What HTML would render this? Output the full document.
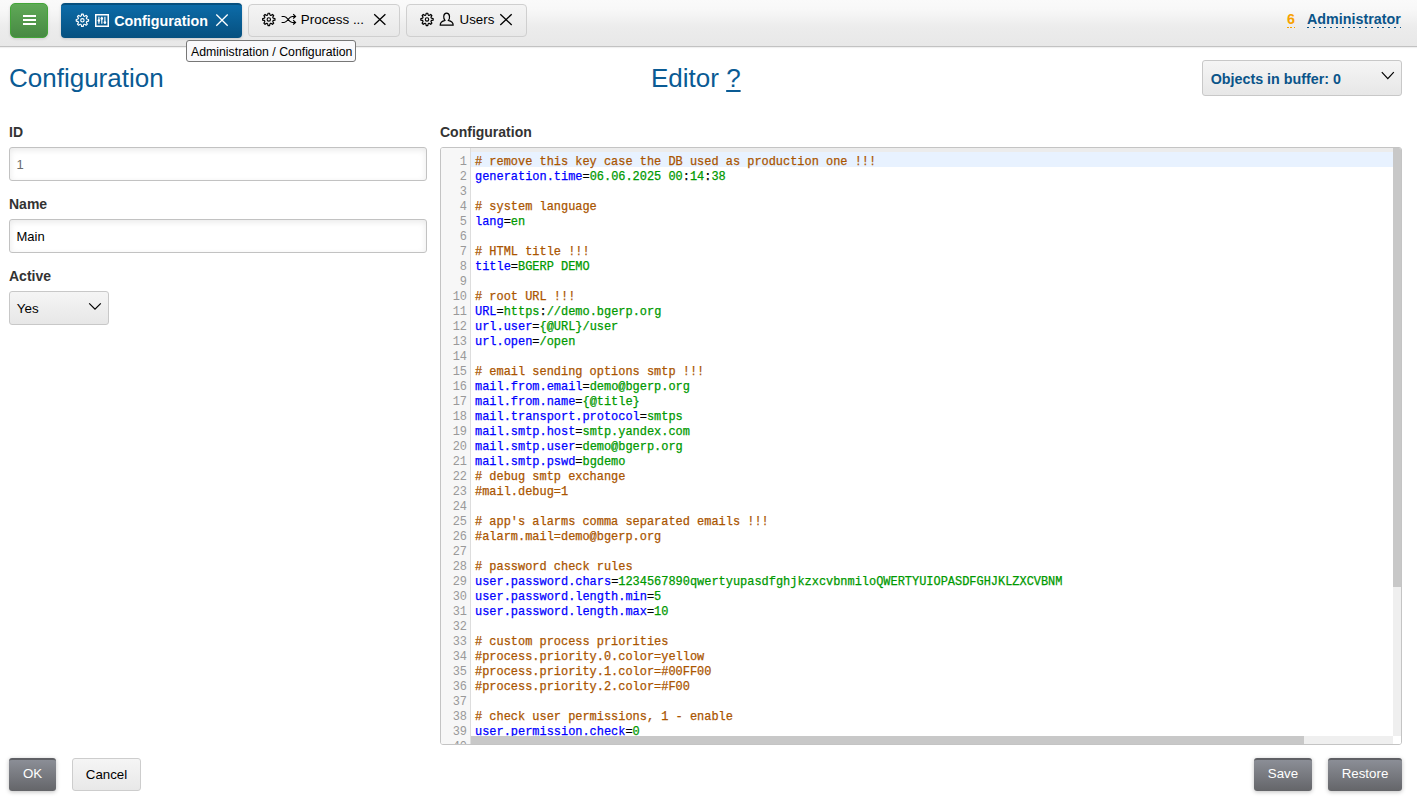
<!DOCTYPE html>
<html><head><meta charset="utf-8">
<style>
*{box-sizing:border-box}
html,body{margin:0;padding:0;width:1417px;height:805px;overflow:hidden;background:#fff;font-family:"Liberation Sans",sans-serif;color:#333}
.abs{position:absolute}
#hdr{position:absolute;left:0;top:0;width:1417px;height:47px;background:linear-gradient(#fafafa 0,#f8f8f8 9px,#ececec 27px,#e8e8e8 46px);border-bottom:1px solid #c2c2c2;box-shadow:0 1px 1px rgba(0,0,0,.06)}
#menu{left:10px;top:3px;width:38px;height:35px;border:1px solid #43a538;border-radius:5px;background:linear-gradient(#5fa957,#478943);box-shadow:0 1px 3px rgba(0,0,0,.12)}
#menu i{position:absolute;left:11.6px;width:13px;height:1.7px;background:#fff}
.tab{position:absolute;border-radius:4px;font-size:13px;color:#000}
#t1{left:61px;top:3px;width:181px;height:35px;background:linear-gradient(#0c6ba8,#06507f);border-top:2px solid #064f7e;color:#fff;font-weight:bold;font-size:14px;box-shadow:0 1px 3px rgba(0,0,0,.15)}
#t2{left:248px;top:4px;width:152px;height:33px;border:1px solid #cfcfcf;background:linear-gradient(#f4f4f4,#e8e8e8)}
#t3{left:406px;top:4px;width:121px;height:33px;border:1px solid #cfcfcf;background:linear-gradient(#f4f4f4,#e8e8e8)}
.tab span{position:absolute;white-space:nowrap}
.tab svg{position:absolute}
#tip{left:186px;top:40px;width:170px;height:22px;border:1px solid #777;border-radius:3px;background:#f9f9fb;font-size:12.3px;color:#000;padding:4px 0 0 4px;white-space:nowrap}
#user{right:16px;top:11px;font-size:14px;font-weight:bold;white-space:nowrap}
h1{position:absolute;margin:0;font-weight:normal;font-size:26px;color:#0a5b94;white-space:nowrap}
.lbl{position:absolute;font-weight:bold;font-size:14px;color:#333;white-space:nowrap}
.inp{position:absolute;left:9px;width:418px;height:34px;border:1px solid #c2c2c2;border-radius:3px;background:#fff;box-shadow:inset 0 2px 6px rgba(0,0,0,.09);font-size:13px;color:#000;padding:0 0 0 6.5px;line-height:33px}
.sel{position:absolute;border:1px solid #c8c8c8;border-radius:3px;background:linear-gradient(#f5f5f5,#e7e7e7)}
.btn{position:absolute;top:758px;height:33px;border-radius:3px;font-size:13.3px;text-align:center;line-height:32px}
.dark{background:linear-gradient(#8b8e96,#646569);border-top:2px solid #5f6065;color:#fff;box-shadow:0 1px 4px rgba(0,0,0,.25);line-height:28px}
.light{border:1px solid #cdcdcd;background:linear-gradient(#f5f5f5,#e8e8e8);color:#000}
#ed{position:absolute;left:440px;top:147px;width:962px;height:598px;border:1px solid #c4c4c4;border-radius:3px;overflow:hidden;background:#fff}
#gut{position:absolute;left:0;top:0;width:30px;height:100%;background:#f7f7f7;border-right:1px solid #ddd}
#code{position:absolute;left:0;top:4px;width:100%;-webkit-text-stroke:0.25px currentColor;font-family:"Liberation Mono",monospace;font-size:11.95px;line-height:15px;white-space:pre;color:#000}
.ln{position:relative;height:15px}
.ln b{position:absolute;top:2.5px;left:0;width:26px;text-align:right;color:#999;font-weight:normal;-webkit-text-stroke:0}
.ln s{position:absolute;top:2.5px;left:34px;text-decoration:none}
i{font-style:normal}
.c{color:#a50}.k{color:#00f}.v{color:#090}
</style></head><body>
<div id="hdr"></div>
<div id="menu" class="abs"><i style="top:11.1px"></i><i style="top:15.1px"></i><i style="top:19.2px"></i></div>

<div id="t1" class="tab"></div>
<div id="t2" class="tab"></div>
<div id="t3" class="tab"></div>
<svg class="abs" style="left:0;top:0" width="560" height="47" viewBox="0 0 560 47"><path d="M81.59 14.15L83.21 14.15Q83.43 17.81 86.17 15.38L87.32 16.53Q84.89 19.27 88.55 19.49L88.55 21.11Q84.89 21.33 87.32 24.07L86.17 25.22Q83.43 22.79 83.21 26.45L81.59 26.45Q81.37 22.79 78.63 25.22L77.48 24.07Q79.91 21.33 76.25 21.11L76.25 19.49Q79.91 19.27 77.48 16.53L78.63 15.38Q81.37 17.81 81.59 14.15Z" fill="none" stroke="#fff" stroke-width="1.2" stroke-linejoin="round"/><circle cx="82.4" cy="20.3" r="1.7" fill="none" stroke="#fff" stroke-width="1.1"/><rect x="95.75" y="14.75" width="12.5" height="11.5" fill="none" stroke="#fff" stroke-width="1.5"/><path d="M98.9 16.8v7M101.8 16.8v7M104.9 16.8v7" stroke="#fff" stroke-width="1.15"/><circle cx="98.9" cy="20.5" r="1.3" fill="#fff"/><circle cx="101.8" cy="18.6" r="1.3" fill="#fff"/><circle cx="104.9" cy="22.5" r="1.3" fill="#fff"/><path d="M216.3 14.5L227.7 25.7M227.7 14.5L216.3 25.7" stroke="#fff" stroke-width="1.3" fill="none"/><path d="M267.99 13.25L269.61 13.25Q269.83 16.91 272.57 14.48L273.72 15.63Q271.29 18.37 274.95 18.59L274.95 20.21Q271.29 20.43 273.72 23.17L272.57 24.32Q269.83 21.89 269.61 25.55L267.99 25.55Q267.77 21.89 265.03 24.32L263.88 23.17Q266.31 20.43 262.65 20.21L262.65 18.59Q266.31 18.37 263.88 15.63L265.03 14.48Q267.77 16.91 267.99 13.25Z" fill="none" stroke="#000" stroke-width="1.2" stroke-linejoin="round"/><circle cx="268.8" cy="19.4" r="1.7" fill="none" stroke="#000" stroke-width="1.1"/><path d="M281.6 16.4H284.2C287.6 16.4 288.6 22.4 292.2 22.4H295.4M281.6 22.4H284.2C287.6 22.4 288.6 16.4 292.2 16.4H295.4" fill="none" stroke="#000" stroke-width="1.05"/><path d="M293.2 14.3L295.5 16.4L293.2 18.5M293.2 20.3L295.5 22.4L293.2 24.5" fill="none" stroke="#000" stroke-width="1.2"/><path d="M374.2 14.3L385.4 24.8M385.4 14.3L374.2 24.8" stroke="#000" stroke-width="1.3" fill="none"/><path d="M426.19 13.25L427.81 13.25Q428.03 16.91 430.77 14.48L431.92 15.63Q429.49 18.37 433.15 18.59L433.15 20.21Q429.49 20.43 431.92 23.17L430.77 24.32Q428.03 21.89 427.81 25.55L426.19 25.55Q425.97 21.89 423.23 24.32L422.08 23.17Q424.51 20.43 420.85 20.21L420.85 18.59Q424.51 18.37 422.08 15.63L423.23 14.48Q425.97 16.91 426.19 13.25Z" fill="none" stroke="#000" stroke-width="1.2" stroke-linejoin="round"/><circle cx="427" cy="19.4" r="1.7" fill="none" stroke="#000" stroke-width="1.1"/><path d="M445.1 20.4C443.2 19.1 442.9 13.2 446.6 13.2C450.3 13.2 450.1 19.1 448.2 20.4C451.6 21.2 453.2 23.2 453.2 25.2H440.2C440.2 23.2 441.8 21.2 445.1 20.4Z" fill="none" stroke="#000" stroke-width="1.2" stroke-linejoin="round"/><path d="M500.3 14.3L511.7 24.9M511.7 14.3L500.3 24.9" stroke="#000" stroke-width="1.3" fill="none"/></svg>
<div class="abs" style="left:114.3px;top:13.4px;font-size:14.3px;font-weight:bold;color:#fff;white-space:nowrap">Configuration</div>
<div class="abs" style="left:300.8px;top:12px;font-size:13.4px;color:#000;white-space:nowrap">Process ...</div>
<div class="abs" style="left:459.6px;top:12.2px;font-size:13.3px;color:#000;white-space:nowrap">Users</div>
<div class="abs" style="left:1287px;top:11.1px;font-size:14.3px;font-weight:bold;color:#f7a100;white-space:nowrap">6</div>
<div class="abs" style="left:1287px;top:27px;width:8px;height:1px;background:repeating-linear-gradient(90deg,#f7a100 0 1.6px,transparent 1.6px 3.5px)"></div>
<div class="abs" style="left:1307px;top:11.1px;font-size:14.3px;font-weight:bold;color:#0a5489;white-space:nowrap">Administrator</div>
<div class="abs" style="left:1307px;top:27px;width:94px;height:1px;background:repeating-linear-gradient(90deg,#0a5489 0 2px,transparent 2px 5.8px)"></div>
<div id="tip" class="abs">Administration / Configuration</div>

<h1 style="left:9px;top:62.5px">Configuration</h1>
<h1 style="left:651px;top:63px">Editor <u style="text-underline-offset:3px">?</u></h1>

<div class="lbl" style="left:9px;top:124px">ID</div>
<div class="inp" style="top:147px;color:#6d6d6d">1</div>
<div class="lbl" style="left:9px;top:196px">Name</div>
<div class="inp" style="top:219px">Main</div>
<div class="lbl" style="left:9px;top:268px">Active</div>
<div class="sel" style="left:9px;top:291px;width:100px;height:34px"></div>
<div class="abs" style="left:16.8px;top:300.5px;font-size:13.4px;color:#000">Yes</div>
<svg class="abs" style="left:86px;top:300px" width="18" height="12"><path d="M3.2 3.3L9 9.2L14.8 3.3" fill="none" stroke="#000" stroke-width="1.2"/></svg>
<div class="sel" style="left:1202px;top:60px;width:200px;height:36px"></div>
<div class="abs" style="left:1210.7px;top:71px;font-size:14.3px;font-weight:bold;color:#0a5489;white-space:nowrap">Objects in buffer: 0</div>
<svg class="abs" style="left:1379px;top:69px" width="18" height="12"><path d="M2.8 3.2L8.8 9.6L14.8 3.2" fill="none" stroke="#000" stroke-width="1.2"/></svg>


<div class="lbl" style="left:440px;top:124px">Configuration</div>
<div id="ed"><div id="gut"></div><div class="abs" style="left:30px;top:0;width:922px;height:4px;background:#ececec"></div><div class="abs" style="left:30px;top:4px;width:922px;height:15px;background:#e8f2ff"></div><div id="code"><div class="ln"><b>1</b><s><i class="c"># remove this key case the DB used as production one !!!</i></s></div><div class="ln"><b>2</b><s><i class="k">generation.time</i>=<i class="v">06.06.2025 00</i><i>:</i><i class="v">14</i><i>:</i><i class="v">38</i></s></div><div class="ln"><b>3</b><s></s></div><div class="ln"><b>4</b><s><i class="c"># system language</i></s></div><div class="ln"><b>5</b><s><i class="k">lang</i>=<i class="v">en</i></s></div><div class="ln"><b>6</b><s></s></div><div class="ln"><b>7</b><s><i class="c"># HTML title !!!</i></s></div><div class="ln"><b>8</b><s><i class="k">title</i>=<i class="v">BGERP DEMO</i></s></div><div class="ln"><b>9</b><s></s></div><div class="ln"><b>10</b><s><i class="c"># root URL !!!</i></s></div><div class="ln"><b>11</b><s><i class="k">URL</i>=<i class="v">https</i><i>:</i><i class="v">//demo.bgerp.org</i></s></div><div class="ln"><b>12</b><s><i class="k">url.user</i>=<i class="v">{@URL}/user</i></s></div><div class="ln"><b>13</b><s><i class="k">url.open</i>=<i class="v">/open</i></s></div><div class="ln"><b>14</b><s></s></div><div class="ln"><b>15</b><s><i class="c"># email sending options smtp !!!</i></s></div><div class="ln"><b>16</b><s><i class="k">mail.from.email</i>=<i class="v">demo@bgerp.org</i></s></div><div class="ln"><b>17</b><s><i class="k">mail.from.name</i>=<i class="v">{@title}</i></s></div><div class="ln"><b>18</b><s><i class="k">mail.transport.protocol</i>=<i class="v">smtps</i></s></div><div class="ln"><b>19</b><s><i class="k">mail.smtp.host</i>=<i class="v">smtp.yandex.com</i></s></div><div class="ln"><b>20</b><s><i class="k">mail.smtp.user</i>=<i class="v">demo@bgerp.org</i></s></div><div class="ln"><b>21</b><s><i class="k">mail.smtp.pswd</i>=<i class="v">bgdemo</i></s></div><div class="ln"><b>22</b><s><i class="c"># debug smtp exchange</i></s></div><div class="ln"><b>23</b><s><i class="c">#mail.debug=1</i></s></div><div class="ln"><b>24</b><s></s></div><div class="ln"><b>25</b><s><i class="c"># app&#x27;s alarms comma separated emails !!!</i></s></div><div class="ln"><b>26</b><s><i class="c">#alarm.mail=demo@bgerp.org</i></s></div><div class="ln"><b>27</b><s></s></div><div class="ln"><b>28</b><s><i class="c"># password check rules</i></s></div><div class="ln"><b>29</b><s><i class="k">user.password.chars</i>=<i class="v">1234567890qwertyupasdfghjkzxcvbnmiloQWERTYUIOPASDFGHJKLZXCVBNM</i></s></div><div class="ln"><b>30</b><s><i class="k">user.password.length.min</i>=<i class="v">5</i></s></div><div class="ln"><b>31</b><s><i class="k">user.password.length.max</i>=<i class="v">10</i></s></div><div class="ln"><b>32</b><s></s></div><div class="ln"><b>33</b><s><i class="c"># custom process priorities</i></s></div><div class="ln"><b>34</b><s><i class="c">#process.priority.0.color=yellow</i></s></div><div class="ln"><b>35</b><s><i class="c">#process.priority.1.color=#00FF00</i></s></div><div class="ln"><b>36</b><s><i class="c">#process.priority.2.color=#F00</i></s></div><div class="ln"><b>37</b><s></s></div><div class="ln"><b>38</b><s><i class="c"># check user permissions, 1 - enable</i></s></div><div class="ln"><b>39</b><s><i class="k">user.permission.check</i>=<i class="v">0</i></s></div><div class="ln"><b>40</b><s></s></div></div><div class="abs" style="left:952px;top:0;width:8px;height:439px;background:#c8c8c8"></div><div class="abs" style="left:952px;top:439px;width:8px;height:149px;background:#efefef"></div><div class="abs" style="left:30px;top:588px;width:833px;height:8px;background:#c8c8c8"></div><div class="abs" style="left:863px;top:588px;width:89px;height:8px;background:#efefef"></div><div class="abs" style="left:952px;top:588px;width:8px;height:8px;background:#fff"></div></div>

<div class="btn dark" style="left:9px;width:47px">OK</div>
<div class="btn light" style="left:72px;width:69px">Cancel</div>
<div class="btn dark" style="left:1254px;width:58px">Save</div>
<div class="btn dark" style="left:1328px;width:74px">Restore</div>
</body></html>
